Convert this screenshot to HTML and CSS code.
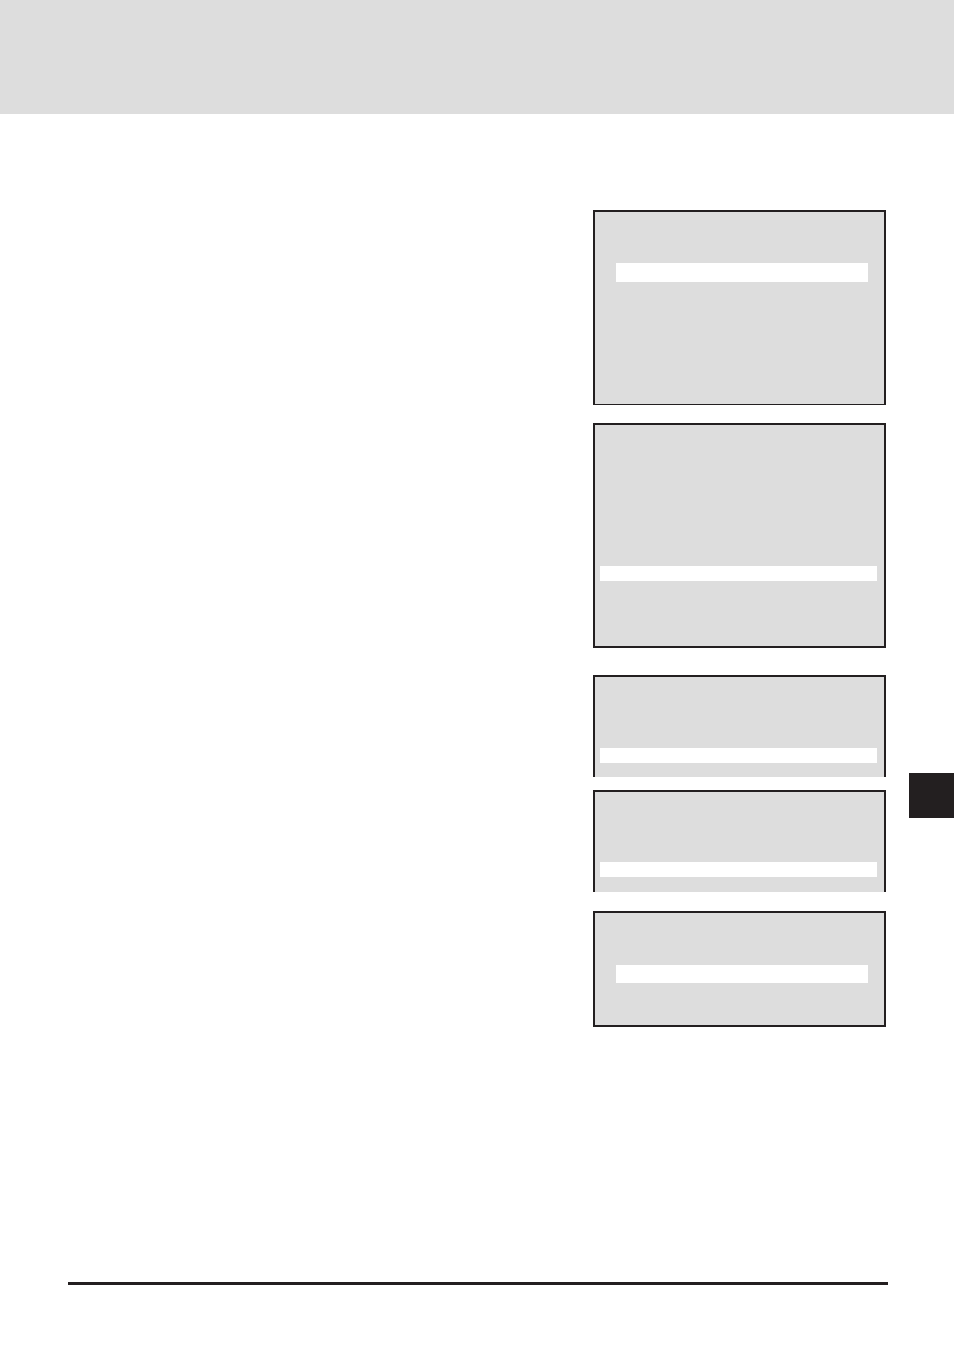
FILE: index.html
```html
<!DOCTYPE html>
<html lang="en">
<head>
  <meta charset="UTF-8">
  <meta name="viewport" content="width=device-width, initial-scale=1.0">
  <link rel="stylesheet" href="styles.css">
</head>
<body>
  <header class="banner"></header>
  <main class="content">
    <div class="panels">
      <section class="panel menu">
        <div class="highlight"></div>
      </section>
      <section class="panel list">
        <div class="highlight"></div>
      </section>
      <section class="panel open">
        <div class="highlight"></div>
      </section>
      <section class="panel open last">
        <div class="highlight"></div>
      </section>
      <section class="panel menu short">
        <div class="highlight"></div>
      </section>
    </div>
    <aside class="thumb-index">
      <div class="tab"></div>
    </aside>
  </main>
  <footer class="page-footer">
    <hr class="rule">
  </footer>
</body>
</html>
```

FILE: styles.css
```css
:root {
  --ink: #231f20;
  --panel: #dddddd;
  --paper: #ffffff;
}
* { box-sizing: border-box; margin: 0; padding: 0; }
body {
  min-height: 100vh;
  display: flex;
  flex-direction: column;
  background: var(--paper);
  font-family: "Liberation Sans", sans-serif;
}
.banner { height: 114px; background: var(--panel); }

.content {
  flex: 1;
  display: grid;
  grid-template-columns: 293px 45px;
  column-gap: 23px;
  justify-content: end;
  padding-top: 96px;
}

/* display panels */
.panel { background: var(--panel); border: 2px solid var(--ink); }
.highlight { height: 15px; background: var(--paper); }

.menu { padding: 51px 16px 122px 21px; border-bottom-width: 1px; margin-bottom: 18px; }
.menu .highlight { height: 19px; }

.list { padding: 141px 7px 65px 5px; margin-bottom: 27px; }

/* cut off at the bottom, the screen continues */
.open { padding: 71px 7px 14px 5px; border-bottom: none; margin-bottom: 13px; }
.last { padding-top: 70px; padding-bottom: 15px; margin-bottom: 19px; }

.short { padding-top: 52px; padding-bottom: 42px; border-bottom-width: 2px; margin-bottom: 0; }
.short .highlight { height: 18px; }

/* chapter tab on the page edge */
.thumb-index { padding-top: 563px; }
.tab { height: 45px; background: var(--ink); }

.page-footer { padding: 0 66px 66px 68px; }
.rule { height: 3px; border: none; background: var(--ink); }
```
